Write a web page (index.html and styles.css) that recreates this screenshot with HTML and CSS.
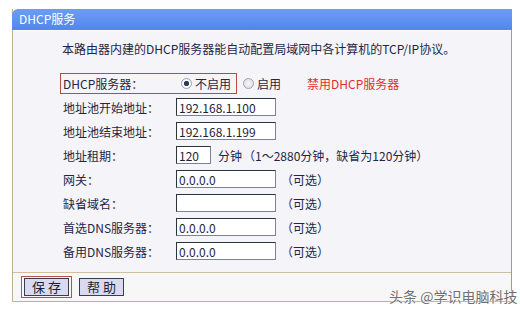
FILE: index.html
```html
<!DOCTYPE html>
<html>
<head>
  <meta charset="utf-8">
  <title>DHCP服务</title>
  <link rel="stylesheet" href="styles.css">
</head>
<body>
  <div class="panel">
    <div class="panel-title">DHCP服务</div>

    <div class="panel-body">
      <p class="intro">本路由器内建的DHCP服务器能自动配置局域网中各计算机的TCP/IP协议。</p>

      <div class="form">
        <div class="row">
          <span class="mark">
            <span class="label">DHCP服务器：</span>
            <span class="opt"><span class="radio checked"></span>不启用</span>
          </span>
          <span class="opt opt-off"><span class="radio"></span>启用</span>
          <span class="warn">禁用DHCP服务器</span>
        </div>
        <div class="row">
          <span class="label">地址池开始地址：</span>
          <input class="field" type="text" value="192.168.1.100">
        </div>
        <div class="row">
          <span class="label">地址池结束地址：</span>
          <input class="field" type="text" value="192.168.1.199">
        </div>
        <div class="row">
          <span class="label">地址租期：</span>
          <input class="field field-short" type="text" value="120">
          <span class="unit">分钟</span>
          <span class="hint">（1～2880分钟，缺省为120分钟）</span>
        </div>
        <div class="row">
          <span class="label">网关：</span>
          <input class="field" type="text" value="0.0.0.0">
          <span class="note">（可选）</span>
        </div>
        <div class="row">
          <span class="label">缺省域名：</span>
          <input class="field" type="text" value="">
          <span class="note">（可选）</span>
        </div>
        <div class="row">
          <span class="label">首选DNS服务器：</span>
          <input class="field" type="text" value="0.0.0.0">
          <span class="note">（可选）</span>
        </div>
        <div class="row">
          <span class="label">备用DNS服务器：</span>
          <input class="field" type="text" value="0.0.0.0">
          <span class="note">（可选）</span>
        </div>
      </div>
    </div>

    <div class="panel-foot">
      <span class="btn-mark"><button class="btn">保 存</button></span>
      <button class="btn">帮 助</button>
    </div>
  </div>

  <div class="watermark">头条 @学识电脑科技</div>
</body>
</html>
```

FILE: styles.css
```css
body {
  margin: 0;
  padding-top: 9px;
  background-color: #ffffff;
  font-family: "Noto Sans CJK SC", "DejaVu Sans", sans-serif;
  font-size: 12px;
  color: #1d2747;
}

.panel {
  width: 500px;
  margin-left: 12px;
  box-sizing: border-box;
  border-left: 1px solid #bfb295;
  border-right: 1px solid #a89c80;
  border-bottom: 1px solid #bfb295;
}

.panel-title {
  height: 20px;
  margin: 0 -1px;
  padding-left: 7px;
  line-height: 20px;
  color: #ffffff;
  background: linear-gradient(#6d9cf3, #5a8ef0 70%, #5287ea);
  border-top-left-radius: 6px;
  border-bottom: 1px solid #6f86b8;
}

.panel-body {
  padding: 10px 0 9px 0;
  background-color: #f5f4f8;
  border-top: 1px solid #fbfbfd;
}

.intro {
  margin: 0 0 14px 49px;
  line-height: 16px;
  font-size: 12px;
}

.form {
  display: flex;
  flex-direction: column;
  padding-left: 50px;
}

.row {
  display: flex;
  align-items: center;
  height: 24px;
}

.label {
  width: 113px;
  flex-shrink: 0;
  white-space: nowrap;
}

.mark {
  display: flex;
  align-items: center;
  height: 19px;
  margin-left: -3px;
  padding: 0 5px 0 2px;
  border: 1px solid #b84a4a;
}

.opt {
  display: flex;
  align-items: center;
  gap: 3px;
  margin-left: 5px;
}

.opt-off {
  margin-left: 6px;
}

.radio {
  width: 9px;
  height: 9px;
  border-radius: 50%;
  border: 1px solid #9aa3b4;
  background: radial-gradient(circle, #f4f4f6 0, #dcdde3 100%);
}

.radio.checked {
  background: radial-gradient(circle, #2c3a5e 0, #2c3a5e 2.2px, #ffffff 3px, #e6e8ee 100%);
}

.warn {
  margin-left: 26px;
  color: #e0302c;
}

.field {
  width: 100px;
  height: 18px;
  box-sizing: border-box;
  margin: 0;
  padding: 0 2px;
  font-family: "Noto Sans CJK SC", "DejaVu Sans", sans-serif;
  font-size: 12px;
  color: #1f2433;
  background-color: #ffffff;
  border: 1px solid #7c8296;
  border-top-color: #2e3340;
  border-left-color: #2e3340;
  outline: none;
}

.field-short {
  width: 35px;
}

.unit {
  margin-left: 7px;
}

.hint {
  margin-left: 1px;
}

.note {
  margin-left: 5px;
}

.panel-foot {
  display: flex;
  align-items: center;
  gap: 7px;
  height: 28px;
  padding-left: 8px;
  background-color: #f8f7f7;
  border-top: 1px solid #cdbf9f;
}

.btn-mark {
  display: flex;
  padding: 1px 2px;
  border: 1px solid #b05050;
}

.btn {
  width: 45px;
  height: 18px;
  padding: 0;
  font-family: "Noto Sans CJK SC", "DejaVu Sans", sans-serif;
  font-size: 13px;
  line-height: 16px;
  color: #1b1f33;
  background-color: #d9daf0;
  border: 1px solid #3a3d4e;
}

.watermark {
  position: absolute;
  left: 389px;
  top: 286px;
  font-size: 14px;
  color: #707070;
  text-shadow: 0 0 2px #ffffff, 0 0 1px #ffffff;
}
```
